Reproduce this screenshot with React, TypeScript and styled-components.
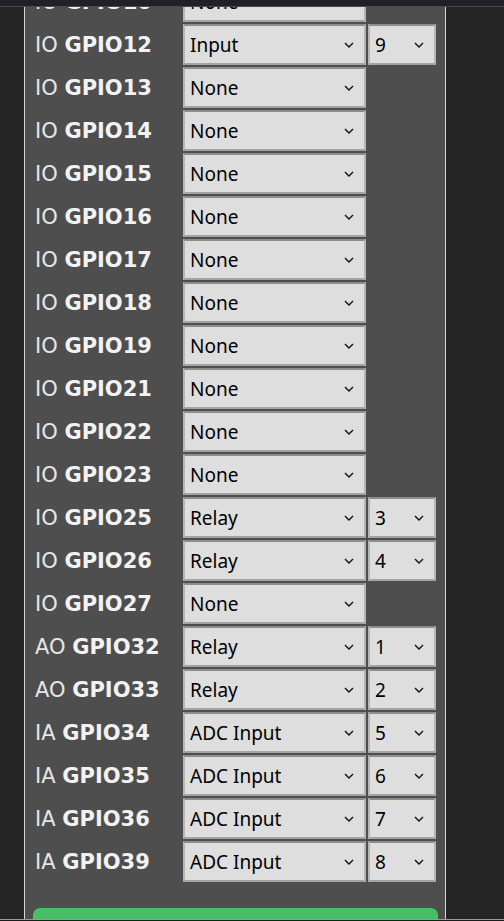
import React from 'react';
import styled, { createGlobalStyle } from 'styled-components';

const GlobalStyle = createGlobalStyle`
  html, body {
    margin: 0;
    padding: 0;
    background: #252525;
    overflow: hidden;
  }
`;

const TopBar = styled.div`
  position: fixed;
  top: 0;
  left: 0;
  right: 0;
  height: 6px;
  background: #202127;
  border-bottom: 1px solid #4a4a4e;
  z-index: 2;
`;

const BottomBar = styled.div`
  position: fixed;
  left: 0;
  right: 0;
  bottom: 0;
  height: 1px;
  background: #1c1c1c;
  border-top: 1px solid #9a9a9a;
  z-index: 2;
`;

const Page = styled.div`
  height: 921px;
  overflow: hidden;
  padding-left: 24px;
`;

const Panel = styled.div`
  box-sizing: border-box;
  width: 422px;
  margin-top: -19px;
  background: #4e4e4e;
  border-left: 1px solid #d8d8d8;
  border-right: 1px solid #d8d8d8;
  padding: 0 11px 0 10px;
  display: flex;
  flex-direction: column;
  gap: 2px;
`;

const Row = styled.div`
  display: grid;
  grid-template-columns: 146px 183px 68px;
  column-gap: 2px;
  align-items: center;
  height: 41px;
`;

const Label = styled.div`
  font-family: 'DejaVu Sans', sans-serif;
  font-size: 21px;
  color: #e6e6e6;
  white-space: nowrap;
  b {
    font-weight: bold;
    color: #f2f2f2;
  }
`;

const SelectBox = styled.div`
  position: relative;
  height: 41px;
  box-sizing: border-box;
  background: #dedede;
  border: 2px solid;
  border-color: #8d8d8d #b6b6b6 #a3a3a3 #b6b6b6;
`;

const Select = styled.select`
  appearance: none;
  -webkit-appearance: none;
  width: 100%;
  height: 100%;
  border: none;
  outline: none;
  background: transparent;
  font-family: 'Noto Sans', 'Segoe UI', sans-serif;
  font-size: 19px;
  color: #000;
  padding: 0 0 0 5px;
  margin: 0;
`;

const Chevron = styled.svg`
  position: absolute;
  top: 16px;
  right: 10px;
  width: 10px;
  height: 6px;
  pointer-events: none;
`;

const SaveButton = styled.button`
  display: block;
  margin: 24px 0 0 -2px;
  width: 405px;
  height: 40px;
  border: none;
  border-radius: 7px;
  background: #45c066;
  color: #fff;
  font-family: 'Noto Sans', sans-serif;
  font-size: 18px;
`;

const ChevronIcon: React.FC = () => (
  <Chevron viewBox="0 0 10 6">
    <path d="M1 1 L5 5 L9 1" fill="none" stroke="#111" strokeWidth="1.4" />
  </Chevron>
);

type Pin = { kind: string; gpio: string; mode: string; idx?: string };

const pins: Pin[] = [
  { kind: 'IO', gpio: 'GPIO10', mode: 'None' },
  { kind: 'IO', gpio: 'GPIO12', mode: 'Input', idx: '9' },
  { kind: 'IO', gpio: 'GPIO13', mode: 'None' },
  { kind: 'IO', gpio: 'GPIO14', mode: 'None' },
  { kind: 'IO', gpio: 'GPIO15', mode: 'None' },
  { kind: 'IO', gpio: 'GPIO16', mode: 'None' },
  { kind: 'IO', gpio: 'GPIO17', mode: 'None' },
  { kind: 'IO', gpio: 'GPIO18', mode: 'None' },
  { kind: 'IO', gpio: 'GPIO19', mode: 'None' },
  { kind: 'IO', gpio: 'GPIO21', mode: 'None' },
  { kind: 'IO', gpio: 'GPIO22', mode: 'None' },
  { kind: 'IO', gpio: 'GPIO23', mode: 'None' },
  { kind: 'IO', gpio: 'GPIO25', mode: 'Relay', idx: '3' },
  { kind: 'IO', gpio: 'GPIO26', mode: 'Relay', idx: '4' },
  { kind: 'IO', gpio: 'GPIO27', mode: 'None' },
  { kind: 'AO', gpio: 'GPIO32', mode: 'Relay', idx: '1' },
  { kind: 'AO', gpio: 'GPIO33', mode: 'Relay', idx: '2' },
  { kind: 'IA', gpio: 'GPIO34', mode: 'ADC Input', idx: '5' },
  { kind: 'IA', gpio: 'GPIO35', mode: 'ADC Input', idx: '6' },
  { kind: 'IA', gpio: 'GPIO36', mode: 'ADC Input', idx: '7' },
  { kind: 'IA', gpio: 'GPIO39', mode: 'ADC Input', idx: '8' },
];

const modes = ['None', 'Input', 'Relay', 'ADC Input'];
const indexes = ['1', '2', '3', '4', '5', '6', '7', '8', '9'];

const App: React.FC = () => {
  return (
    <>
      <GlobalStyle />
      <TopBar />
      <Page>
        <Panel>
          {pins.map((p) => (
            <Row key={p.gpio}>
              <Label>
                {p.kind} <b>{p.gpio}</b>
              </Label>
              <SelectBox>
                <Select defaultValue={p.mode}>
                  {modes.map((m) => (
                    <option key={m}>{m}</option>
                  ))}
                </Select>
                <ChevronIcon />
              </SelectBox>
              {p.idx && (
                <SelectBox>
                  <Select defaultValue={p.idx}>
                    {indexes.map((i) => (
                      <option key={i}>{i}</option>
                    ))}
                  </Select>
                  <ChevronIcon />
                </SelectBox>
              )}
            </Row>
          ))}
          <SaveButton>Save</SaveButton>
        </Panel>
      </Page>
      <BottomBar />
    </>
  );
};

export default App;
